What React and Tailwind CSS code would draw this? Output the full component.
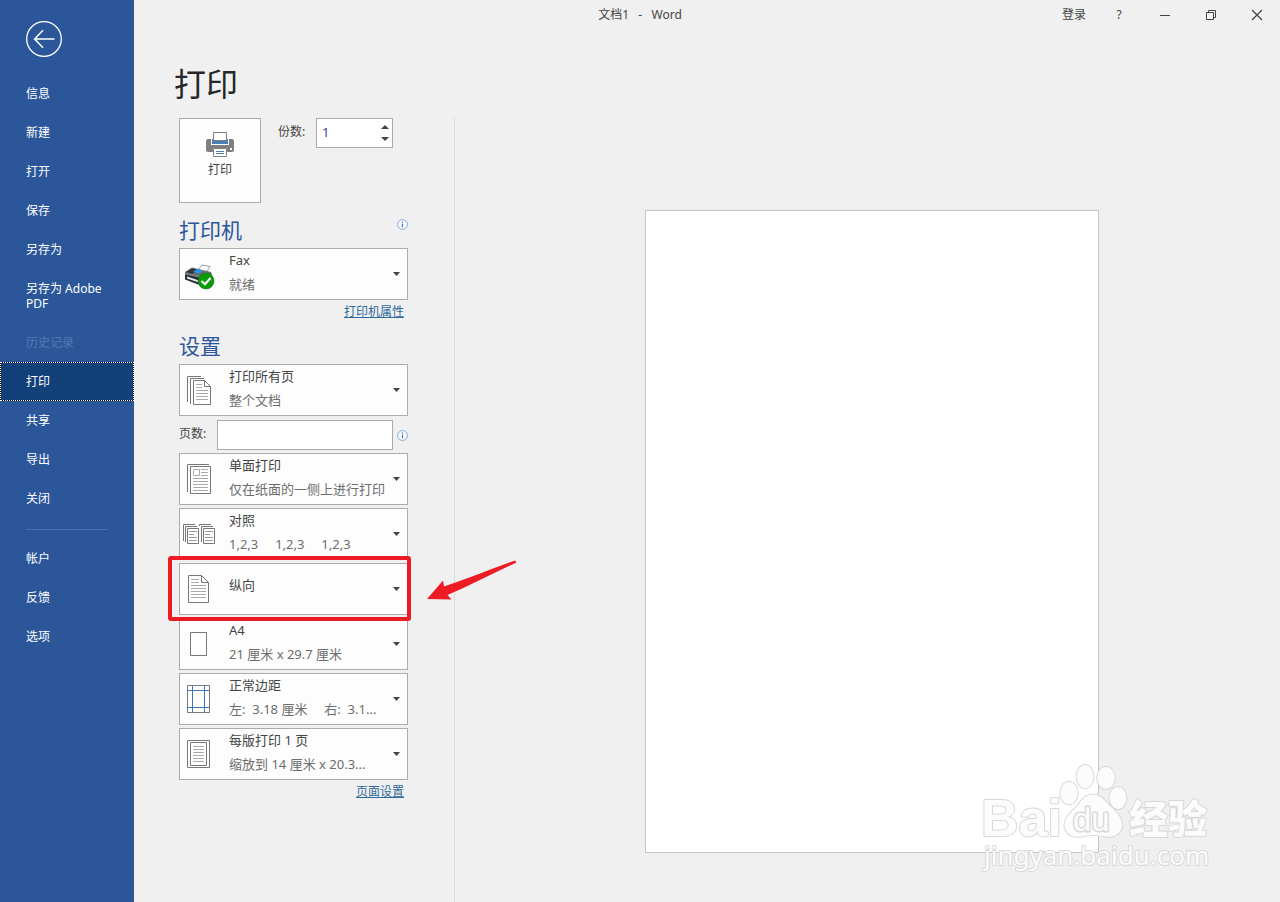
import React from "react";

const NAV_MAIN = [
  { label: "信息" },
  { label: "新建" },
  { label: "打开" },
  { label: "保存" },
  { label: "另存为" },
  { label: "另存为 Adobe PDF" },
  { label: "历史记录", disabled: true },
  { label: "打印", active: true },
  { label: "共享" },
  { label: "导出" },
  { label: "关闭" },
];

const NAV_FOOTER = [{ label: "帐户" }, { label: "反馈" }, { label: "选项" }];

function NavItem({ label, active, disabled }) {
  const base = "block w-full py-3 pl-[26px] pr-6 text-left text-xs leading-[15px]";
  const tone = active
    ? "bg-[#124078] text-white shadow-[inset_0_0_0_1px_#000] outline-dotted outline-1 -outline-offset-1 outline-white"
    : disabled
      ? "text-[#5379b2]"
      : "text-white";
  return (
    <li>
      <button type="button" disabled={disabled} aria-current={active ? "page" : undefined} className={`${base} ${tone}`}>
        {label}
      </button>
    </li>
  );
}

function Sidebar() {
  return (
    <nav aria-label="文件" className="flex w-[134px] shrink-0 flex-col bg-[#2b579a]">
      <button type="button" aria-label="返回" className="ml-[25px] mt-5 mb-4 size-[38px]">
        <svg viewBox="0 0 38 38" className="size-full" fill="none" stroke="#fff">
          <circle cx="19" cy="19" r="17.3" strokeWidth="1.3" />
          <path d="M29.5 19H10M18 10.2L9.6 19L18 27.8" strokeWidth="1.5" />
        </svg>
      </button>
      <ul>
        {NAV_MAIN.map((item) => (
          <NavItem key={item.label} {...item} />
        ))}
      </ul>
      <hr className="mx-[26px] mt-[11px] mb-[9px] border-[#4a70ab]" />
      <ul>
        {NAV_FOOTER.map((item) => (
          <NavItem key={item.label} {...item} />
        ))}
      </ul>
    </nav>
  );
}

function TitleBar() {
  return (
    <header className="grid h-[30px] grid-cols-[1fr_auto_1fr] items-center text-xs text-[#444]">
      <span />
      <h1 className="whitespace-pre pr-[134px]">文档1   -   Word</h1>
      <div className="flex items-center justify-end">
        <button type="button" className="mr-[2px] px-2">登录</button>
        <button type="button" aria-label="帮助" className="w-[46px]">?</button>
        <button type="button" aria-label="最小化" className="flex w-[46px] justify-center">
          <svg viewBox="0 0 12 12" className="size-3" stroke="#444" fill="none"><path d="M1 6.5H11" /></svg>
        </button>
        <button type="button" aria-label="还原" className="flex w-[46px] justify-center">
          <svg viewBox="0 0 12 12" className="size-3" stroke="#444" fill="none">
            <path d="M1.500 3.500H8.500V10.500H1.500ZM3.500 3.500V1.500H10.500V8.500H8.500" />
          </svg>
        </button>
        <button type="button" aria-label="关闭窗口" className="flex w-[46px] justify-center">
          <svg viewBox="0 0 12 12" className="size-3" stroke="#444" strokeWidth="1.3" fill="none"><path d="M1 1L11 11M11 1L1 11" /></svg>
        </button>
      </div>
    </header>
  );
}

function InfoIcon() {
  return (
    <svg viewBox="0 0 11 11" className="size-[11px]" aria-hidden="true">
      <circle cx="5.500" cy="5.500" r="4.900" fill="#f7faff" stroke="#7ba3d6" strokeWidth="0.900" />
      <path d="M5.500 2.500V3.700M5.500 4.700V8.300" stroke="#3d6fb4" strokeWidth="1.100" />
    </svg>
  );
}

function PrinterIcon() {
  return (
    <svg viewBox="0 0 28 25" className="h-[25px] w-7" aria-hidden="true">
      <path d="M1.500 7H26.500L28 8.500V18.500L26.500 20H1.500L0 18.500V8.500Z" fill="#808080" />
      <path d="M5 7H23V13H5Z" fill="#fdfdfd" />
      <path d="M6 7H22V12H6Z" fill="#4a7fbd" />
      <path d="M7.500 0.500H20.500V8.500H7.500Z" fill="#fff" stroke="#808080" />
      <path d="M7 16H21V20H7Z" fill="#fdfdfd" />
      <path d="M7.500 16.500H20.500V24.500H7.500Z" fill="#fff" stroke="#808080" />
      <path d="M10 19.500H18M10 21.500H18" stroke="#4a7fbd" />
      <path d="M24 16H26V18H24Z" fill="#fff" />
    </svg>
  );
}

function FaxIcon() {
  return (
    <svg viewBox="-2 -6 34 32" className="h-8 w-[34px]" aria-hidden="true">
      <path d="M13 7L18 1L26 2.500L22 9Z" fill="#fafafa" stroke="#888" strokeWidth="0.800" />
      <path d="M1 8L8 3.500L27 8L28 11L18 16L1 13Z" fill="#666c72" />
      <path d="M2 8L8 4.500L15 6L8 10Z" fill="#30353a" />
      <path d="M9 8L13 5L19 6.500L15 9.500Z" fill="#2a93e8" />
      <path d="M1 9.500L17 13V20L14 20.500L1 15.500Z" fill="#2c3034" />
      <path d="M3 12.500L15 16.500V18.500L3 14.500Z" fill="#e8eaec" />
      <path d="M1 8.800L18 12.500V14L1 10.600Z" fill="#7c8288" />
      <circle cx="22" cy="17" r="8" fill="#0a9a0a" stroke="#087a08" strokeWidth="0.600" />
      <path d="M17.500 17L21 20.300L26.500 14" fill="none" stroke="#fff" strokeWidth="2.100" />
    </svg>
  );
}

function IconFrame({ children }) {
  return (
    <svg viewBox="0 0 34 32" className="h-8 w-[34px]" fill="none" stroke="#777" aria-hidden="true">
      {children}
    </svg>
  );
}

const AllPagesIcon = () => (
  <IconFrame>
    <path d="M5.500 28V2.500H19M8.500 30V4.500H22" />
    <path d="M11.500 6.500H22.500L28.500 12.500V30.500H11.500ZM22.500 6.500V12.500H28.500" fill="#fff" />
    <path d="M14 10.500H20M14 13.500H20M14 16.500H26M14 19.500H26M14 22.500H26M14 25.500H26" stroke="#aaa" />
  </IconFrame>
);

const OneSidedIcon = () => (
  <IconFrame>
    <path d="M5.500 29V1.500H27" />
    <path d="M8.500 3.500H28.500V30.500H8.500Z" fill="#fff" />
    <path d="M11.500 6.500H17.500V12.500H11.500ZM19 6.500H26M19 9.500H26M19 12.500H26M11 15.500H26M11 18.500H26M11 21.500H26M11 24.500H26M11 27.500H26" stroke="#aaa" />
  </IconFrame>
);

const CollateIcon = () => (
  <IconFrame>
    <path d="M1.500 23V6.500H13M3.500 24V8.500H15M17.500 8V6.500H29M19.500 24V8.500H31" />
    <path d="M5.500 10.500H16.500V25.500H5.500ZM21.500 10.500H32.500V25.500H21.500Z" fill="#fff" />
    <path d="M7 13.500H15M7 16.500H12M7 19.500H15M7 22.500H15M23 13.500H31M23 16.500H28M23 19.500H31M23 22.500H31" stroke="#999" />
  </IconFrame>
);

const PortraitIcon = () => (
  <IconFrame>
    <path d="M6.500 2.500H19.500L26.500 9.500V29.500H6.500ZM19.500 2.500V9.500H26.500" fill="#fff" />
    <path d="M9 6.500H17M9 9.500H17M9 12.500H24M9 15.500H24M9 18.500H24M9 21.500H24M9 24.500H24" stroke="#aaa" />
  </IconFrame>
);

const PaperIcon = () => (
  <IconFrame>
    <path d="M8.500 4.500H24.500V27.500H8.500Z" fill="#fff" />
  </IconFrame>
);

const MarginsIcon = () => (
  <IconFrame>
    <path d="M5.500 2.500H27.500V29.500H5.500Z" fill="#fff" />
    <path d="M10.500 3V29M22.500 3V29M6 7.500H27M6 24.500H27" stroke="#3f78b8" />
  </IconFrame>
);

const PerSheetIcon = () => (
  <IconFrame>
    <path d="M5.500 2.500H27.500V29.500H5.500ZM8.500 4.500H24.500V27.500H8.500Z" fill="#fff" />
    <path d="M11 8.500H22M11 11.500H22M11 14.500H22M11 17.500H22M11 20.500H22M11 23.500H22" stroke="#aaa" />
  </IconFrame>
);

function Caret() {
  return (
    <svg viewBox="0 0 7 4" className="h-1 w-[7px] shrink-0" aria-hidden="true">
      <path d="M0 0H7L3.500 4Z" fill="#444" />
    </svg>
  );
}

function Option({ icon, title, detail }) {
  return (
    <button
      type="button"
      aria-haspopup="listbox"
      className="flex h-[52px] w-full items-center border border-[#ababab] bg-[#fdfdfd] pl-[2px] pr-[7px] text-left text-[13px]"
    >
      <span className="flex w-[34px] shrink-0 justify-center">{icon}</span>
      <span className="ml-[13px] min-w-0 flex-1 self-start">
        <span className={detail ? "block leading-[22px] text-[#444]" : "block leading-[42px] text-[#444]"}>{title}</span>
        {detail && <span className="block truncate whitespace-pre leading-[26px] text-[#6d6d6d]">{detail}</span>}
      </span>
      <Caret />
    </button>
  );
}

function SectionHeading({ children }) {
  return <h3 className="text-[21px] font-normal leading-[30px] text-[#2b579a]">{children}</h3>;
}

function SettingsLink({ children }) {
  return (
    <a href="#page" className="mr-1 self-end text-xs leading-6 text-[#2e6a9e] underline">
      {children}
    </a>
  );
}

function CopiesBox() {
  return (
    <div className="flex h-[30px] w-[77px] border border-[#ababab] bg-white">
      <input id="copies" defaultValue="1" className="w-[60px] min-w-0 pl-[5px] text-[13px] text-[#4b3a8c] outline-none" />
      <div className="flex flex-1 flex-col items-center justify-center gap-2">
        <button type="button" aria-label="增加" className="flex">
          <svg viewBox="0 0 8 4" className="h-1 w-2"><path d="M0 4H8L4 0Z" fill="#444" /></svg>
        </button>
        <button type="button" aria-label="减少" className="flex">
          <svg viewBox="0 0 8 4" className="h-1 w-2"><path d="M0 0H8L4 4Z" fill="#444" /></svg>
        </button>
      </div>
    </div>
  );
}

function PrintPanel() {
  return (
    <section className="flex w-[229px] shrink-0 flex-col">
      <div className="flex items-start">
        <button type="button" className="flex h-[85px] w-[82px] flex-col items-center border border-[#ababab] bg-[#fdfdfd] pt-[13px] text-xs text-[#444]">
          <PrinterIcon />
          <span className="mt-[5px]">打印</span>
        </button>
        <label htmlFor="copies" className="ml-[17px] w-[38px] text-xs leading-7 text-[#444]">份数:</label>
        <CopiesBox />
      </div>

      <div className="mt-3 flex items-start justify-between pb-[3px]">
        <SectionHeading>打印机</SectionHeading>
        <button type="button" aria-label="打印机状态" className="mt-1"><InfoIcon /></button>
      </div>
      <Option icon={<FaxIcon />} title="Fax" detail="就绪" />
      <SettingsLink>打印机属性</SettingsLink>

      <div className="mt-[7px] pb-[3px]">
        <SectionHeading>设置</SectionHeading>
      </div>
      <div className="flex flex-col gap-[3px]">
        <Option icon={<AllPagesIcon />} title="打印所有页" detail="整个文档" />
        <div className="flex items-start pt-px">
          <label htmlFor="pages" className="w-[38px] text-xs leading-7 text-[#444]">页数:</label>
          <input id="pages" className="h-[30px] w-[176px] border border-[#ababab] bg-white px-1 text-[13px] outline-none" />
          <button type="button" aria-label="页数说明" className="ml-1 mt-[10px]"><InfoIcon /></button>
        </div>
        <Option icon={<OneSidedIcon />} title="单面打印" detail="仅在纸面的一侧上进行打印" />
        <Option icon={<CollateIcon />} title="对照" detail="1,2,3     1,2,3     1,2,3" />
        <div className="relative">
          <Option icon={<PortraitIcon />} title="纵向" />
          <div className="pointer-events-none absolute -left-[11px] -top-[7px] -bottom-[6px] -right-[3px] rounded-[3px] border-4 border-[#ed1c24]" />
          <svg viewBox="0 0 90 40" className="pointer-events-none absolute -top-[3px] left-[248px] h-10 w-[90px]" aria-hidden="true">
            <path d="M0 39L16 20.500L17 26.500C42 18 64 9 88 0.500L89.500 2.500C66 13.500 44 25 20.500 35L24.500 39.500Z" fill="#ed1c24" />
          </svg>
        </div>
        <Option icon={<PaperIcon />} title="A4" detail="21 厘米 x 29.7 厘米" />
        <Option icon={<MarginsIcon />} title="正常边距" detail="左:  3.18 厘米     右:  3.1..." />
        <Option icon={<PerSheetIcon />} title="每版打印 1 页" detail="缩放到 14 厘米 x 20.3..." />
      </div>
      <SettingsLink>页面设置</SettingsLink>
    </section>
  );
}

function Watermark() {
  return (
    <svg
      viewBox="0 0 240 120"
      className="pointer-events-none absolute -bottom-[33px] -right-[117px] h-[120px] w-[240px] overflow-visible"
      fill="#fcfcfc"
      stroke="#d8d8d8"
      strokeWidth="2"
      strokeLinejoin="round"
      paintOrder="stroke"
      aria-hidden="true"
    >
      <ellipse cx="94" cy="28" rx="8.800" ry="11.300" />
      <ellipse cx="110" cy="11.500" rx="8.500" ry="11.500" />
      <ellipse cx="131" cy="13" rx="8.800" ry="11" />
      <ellipse cx="143" cy="33" rx="8.500" ry="11" />
      <path d="M118 29.500C127 29.500 130 37 136 42C143 48 148 55 147 62C145 70 138 73 130 71.500C122 69.500 114 69.500 106 71.500C97 73 90 69 89.500 60C89.500 53 95 48 101 42C106 37 109 29.500 118 29.500Z" />
      <text x="6" y="71" fontSize="52" fontWeight="700" fontFamily="'Liberation Sans', Arial, sans-serif">Bai</text>
      <text x="98" y="66" fontSize="33" strokeWidth="3" fontFamily="'Liberation Sans', Arial, sans-serif">du</text>
      <text x="154" y="68" fontSize="39" fontWeight="900" fontFamily="'Noto Sans CJK SC', sans-serif">经验</text>
      <text x="9" y="100" fontSize="26" fontFamily="'Noto Sans', sans-serif">jingyan.baidu.com</text>
    </svg>
  );
}

function Preview() {
  return (
    <section aria-label="打印预览" className="ml-[46px] flex flex-1 justify-center border-l border-[#dcdcdc] pb-[49px] pl-[9px] pt-[92px]">
      <div className="relative aspect-[454/643] w-[454px] self-start border border-[#c6c6c6] bg-white">
        <Watermark />
      </div>
    </section>
  );
}

export default function App() {
  return (
    <div className="flex min-h-screen overflow-hidden bg-[#f0f0f0] font-['Noto_Sans','Noto_Sans_CJK_SC',sans-serif]">
      <Sidebar />
      <div className="flex min-w-0 flex-1 flex-col">
        <TitleBar />
        <main className="flex flex-1 flex-col pl-[45px]">
          <h2 className="-ml-[5px] mb-[14px] mt-[34px] text-[32px] font-normal leading-10 text-[#262626]">打印</h2>
          <div className="flex flex-1">
            <PrintPanel />
            <Preview />
          </div>
        </main>
      </div>
    </div>
  );
}
